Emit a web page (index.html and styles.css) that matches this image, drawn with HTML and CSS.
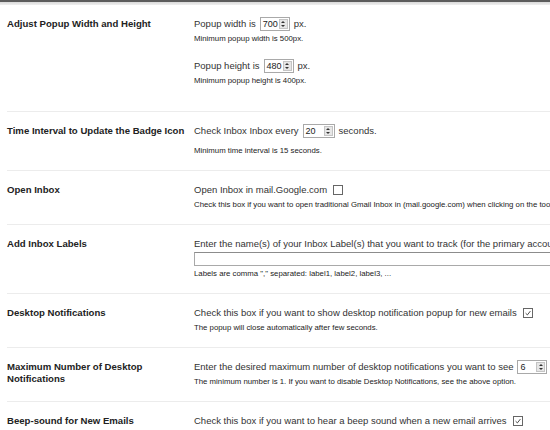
FILE: index.html
```html
<!DOCTYPE html>
<html lang="en">
  <head>
    <meta charset="UTF-8" />
    <meta name="viewport" content="width=device-width, initial-scale=1.0" />
    <title>Options</title>
    <link rel="stylesheet" href="styles.css">
  </head>

  <body>
    <div class="topbar"></div>

    <div class="options">
      <div class="row row-first">
        <div class="label">Adjust Popup Width and Height</div>
        <div class="field">
          <div class="line">Popup width is <span class="num w30"><span class="val">700</span><span class="spin"><i class="up"></i><i class="down"></i></span></span> px.</div>
          <div class="note">Minimum popup width is 500px.</div>
          <div class="line gap">Popup height is <span class="num w30"><span class="val">480</span><span class="spin"><i class="up"></i><i class="down"></i></span></span> px.</div>
          <div class="note">Minimum popup height is 400px.</div>
        </div>
      </div>

      <div class="row row-interval">
        <div class="label">Time Interval to Update the Badge Icon</div>
        <div class="field">
          <div class="line">Check Inbox Inbox every <span class="num w32"><span class="val">20</span><span class="spin"><i class="up"></i><i class="down"></i></span></span> seconds.</div>
          <div class="note">Minimum time interval is 15 seconds.</div>
        </div>
      </div>

      <div class="row">
        <div class="label">Open Inbox</div>
        <div class="field">
          <div class="line">Open Inbox in mail.Google.com <span class="check"></span></div>
          <div class="note">Check this box if you want to open traditional Gmail Inbox in (mail.google.com) when clicking on the toolbar button.</div>
        </div>
      </div>

      <div class="row">
        <div class="label">Add Inbox Labels</div>
        <div class="field">
          <div class="line">Enter the name(s) of your Inbox Label(s) that you want to track (for the primary account only):</div>
          <div class="textbox"></div>
          <div class="note">Labels are comma "," separated: label1, label2, label3, ...</div>
        </div>
      </div>

      <div class="row">
        <div class="label">Desktop Notifications</div>
        <div class="field">
          <div class="line">Check this box if you want to show desktop notification popup for new emails <span class="check on"><svg viewBox="0 0 10 10"><path d="M2 5.2 L4.2 7.4 L8 2.6" /></svg></span></div>
          <div class="note">The popup will close automatically after few seconds.</div>
        </div>
      </div>

      <div class="row">
        <div class="label">Maximum Number of Desktop Notifications</div>
        <div class="field">
          <div class="line">Enter the desired maximum number of desktop notifications you want to see <span class="num w30"><span class="val">6</span><span class="spin"><i class="up"></i><i class="down"></i></span></span></div>
          <div class="note">The minimum number is 1. If you want to disable Desktop Notifications, see the above option.</div>
        </div>
      </div>

      <div class="row">
        <div class="label">Beep-sound for New Emails</div>
        <div class="field">
          <div class="line">Check this box if you want to hear a beep sound when a new email arrives <span class="check on"><svg viewBox="0 0 10 10"><path d="M2 5.2 L4.2 7.4 L8 2.6" /></svg></span></div>
        </div>
      </div>
    </div>
  </body>
</html>
```

FILE: styles.css
```css
* {
  margin: 0;
  padding: 0;
  box-sizing: border-box;
}

body {
  background: #fff;
  font-family: "Liberation Sans", Arial, sans-serif;
  color: #333;
  overflow: hidden;
}

.topbar {
  height: 5px;
  border-top: 2px solid #5c5c5c;
  background: linear-gradient(#d9d9d9, #efefef);
}

.options {
  padding-left: 7px;
  width: 900px;
}

.row {
  display: grid;
  grid-template-columns: 187px 1fr;
  padding: 12px 0 14px;
  border-bottom: 1px solid #ececec;
}
.row-first {
  padding-top: 12px;
  padding-bottom: 25px;
}
.row-interval .note {
  margin-top: 8px;
}

.label {
  font-size: 9.6px;
  font-weight: bold;
  color: #222;
  line-height: 12px;
  padding-top: 1px;
  padding-right: 40px;
}
.row-interval .label {
  padding-right: 0;
  white-space: nowrap;
}

.field {
  white-space: nowrap;
}

.line {
  font-size: 9.5px;
  line-height: 14px;
  display: flex;
  align-items: center;
  gap: 3px;
}
.line.gap {
  margin-top: 15px;
}

.note {
  font-size: 7.8px;
  line-height: 10px;
  margin-top: 3px;
  color: #222;
}

.num {
  display: inline-flex;
  align-items: stretch;
  height: 14px;
  border: 1px solid #a9a9a9;
  background: #fff;
  margin: 0 1px;
}
.num.w30 {
  width: 30px;
}
.num.w32 {
  width: 32px;
}
.num .val {
  flex: 1;
  font-size: 9px;
  line-height: 12px;
  padding-left: 2px;
  color: #222;
}
.num .spin {
  width: 9px;
  margin: 1px;
  background: #e6e6e6;
  border: 1px solid #c4c4c4;
  display: flex;
  flex-direction: column;
  justify-content: space-around;
  align-items: center;
}
.spin i {
  width: 0;
  height: 0;
  border-left: 2px solid transparent;
  border-right: 2px solid transparent;
}
.spin .up {
  border-bottom: 2px solid #333;
}
.spin .down {
  border-top: 2px solid #333;
}

.check {
  display: inline-block;
  width: 10px;
  height: 10px;
  border: 1px solid #666;
  margin-left: 3px;
  background: #fff;
}
.check svg {
  display: block;
  width: 8px;
  height: 8px;
}
.check path {
  fill: none;
  stroke: #444;
  stroke-width: 1.2;
}

.textbox {
  width: 420px;
  height: 14px;
  border: 1px solid #a9a9a9;
  border-top-color: #8c8c8c;
  margin-top: 1px;
}
```
